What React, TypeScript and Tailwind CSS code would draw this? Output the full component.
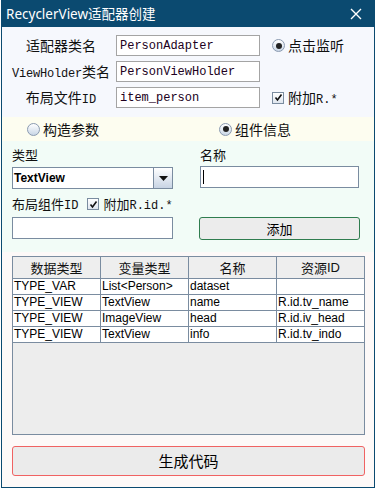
import React from "react";

const CJK = '"Noto Sans CJK SC", "Noto Sans", sans-serif';
const MONO = '"Liberation Mono", "Noto Sans CJK SC", monospace';
const SANS = '"Liberation Sans", Arial, "Noto Sans CJK SC", sans-serif';

function Mono({ children }: { children: React.ReactNode }) {
  return (
    <span style={{ fontFamily: MONO }} className="text-[12px]">
      {children}
    </span>
  );
}

function Radio({ checked }: { checked?: boolean }) {
  return (
    <span className="relative inline-flex h-[13px] w-[13px] items-center justify-center rounded-full border border-[#8a9ab0] bg-gradient-to-b from-[#ffffff] to-[#c9d6e6]">
      {checked && <span className="h-[6px] w-[6px] rounded-full bg-[#222]" />}
    </span>
  );
}

function Check() {
  return (
    <span className="inline-flex h-[12px] w-[12px] items-center justify-center border border-[#7a8ca0] bg-gradient-to-b from-white to-[#dfe6ef]">
      <svg width="9" height="9" viewBox="0 0 9 9">
        <path d="M1.5 4.5 L3.5 7 L7.5 1.5" stroke="#111" strokeWidth="1.6" fill="none" />
      </svg>
    </span>
  );
}

const rows = [
  ["TYPE_VAR", "List<Person>", "dataset", ""],
  ["TYPE_VIEW", "TextView", "name", "R.id.tv_name"],
  ["TYPE_VIEW", "ImageView", "head", "R.id.iv_head"],
  ["TYPE_VIEW", "TextView", "info", "R.id.tv_indo"],
];

export default function App() {
  return (
    <div className="h-[491px] w-[376px] bg-white pl-[1px]" style={{ fontFamily: CJK }}>
      <div className="flex h-[488px] w-[374px] flex-col border border-[#0b4a70]">
        {/* title bar */}
        <div className="flex h-[26px] shrink-0 items-center justify-between bg-[#0b4a70] pl-[4px] pr-[12px] text-white">
          <span className="text-[13.5px]" style={{ fontFamily: '"Noto Sans", "Noto Sans CJK SC", sans-serif' }}>
            RecyclerView适配器创建
          </span>
          <svg width="12" height="12" viewBox="0 0 12 12">
            <path d="M1 1 L11 11 M11 1 L1 11" stroke="white" strokeWidth="1.4" />
          </svg>
        </div>

        {/* top section */}
        <div className="flex h-[90px] shrink-0 flex-col gap-[5px] bg-[#f6f8fd] pt-[8px] text-[14px] text-[#111]">
          <div className="flex h-[21px] items-center">
            <div className="w-[114px] pl-[4px] text-center">适配器类名</div>
            <div className="flex h-[21px] w-[144px] items-center border border-[#a4a4a4] bg-white pl-[3px] text-[#200020]">
              <Mono>PersonAdapter</Mono>
            </div>
            <div className="ml-[12px] flex items-center gap-[3px]">
              <Radio checked />
              <span>点击监听</span>
            </div>
          </div>
          <div className="flex h-[21px] items-center">
            <div className="w-[114px] pl-[4px] text-center">
              <span style={{ fontFamily: MONO }} className="text-[12px] tracking-[-0.2px]">ViewHolder</span>类名
            </div>
            <div className="flex h-[21px] w-[144px] items-center border border-[#a4a4a4] bg-white pl-[3px] text-[#200020]">
              <Mono>PersonViewHolder</Mono>
            </div>
          </div>
          <div className="flex h-[21px] items-center">
            <div className="w-[114px] pl-[4px] text-center">
              布局文件<Mono>ID</Mono>
            </div>
            <div className="flex h-[21px] w-[144px] items-center border border-[#a4a4a4] bg-white pl-[3px] text-[#200020]">
              <Mono>item_person</Mono>
            </div>
            <div className="ml-[12px] flex items-center gap-[4px]">
              <Check />
              <span>
                附加<Mono>R.*</Mono>
              </span>
            </div>
          </div>
        </div>

        {/* radio row */}
        <div className="flex h-[24px] shrink-0 items-center bg-[#fdfdf0] text-[14px] text-[#111]">
          <div className="ml-[25px] flex items-center gap-[3px]">
            <Radio />
            <span>构造参数</span>
          </div>
          <div className="ml-[120px] flex items-center gap-[3px]">
            <Radio checked />
            <span>组件信息</span>
          </div>
        </div>

        {/* component section */}
        <div className="flex h-[111px] shrink-0 bg-[#f2fcf7] pl-[10px] pt-[4px] text-[13px] text-[#111]">
          <div className="flex w-[161px] flex-col">
            <div className="h-[20px] leading-[20px]">类型</div>
            <div className="mt-[2px] flex h-[22px] border border-[#7a8ca0] bg-white">
              <div className="flex flex-1 items-center pl-[1px] text-[12px] font-bold text-black" style={{ fontFamily: SANS }}>
                TextView
              </div>
              <div className="flex w-[19px] items-center justify-center border-l border-[#7a8ca0] bg-gradient-to-b from-white to-[#c8d4e4]">
                <svg width="9" height="5" viewBox="0 0 9 5">
                  <path d="M0 0 L9 0 L4.5 5 Z" fill="#111" />
                </svg>
              </div>
            </div>
            <div className="mt-[7px] flex h-[16px] items-center">
              <span>
                布局组件<Mono>ID</Mono>
              </span>
              <span className="ml-[9px] flex items-center gap-[4px]">
                <Check />
                <span>
                  附加<Mono>R.id.*</Mono>
                </span>
              </span>
            </div>
            <div className="mt-[5px] h-[22px] border border-[#7a8ca0] bg-white" />
          </div>
          <div className="ml-[27px] flex w-[160px] flex-col">
            <div className="h-[20px] leading-[20px]">名称</div>
            <div className="mt-[1px] flex h-[22px] w-[159px] items-center border border-[#7a8ca0] bg-white pl-[2px]">
              <span className="h-[14px] w-[1px] bg-black" />
            </div>
            <div className="ml-[-1px] mt-[29px] flex h-[23px] items-center justify-center rounded-[3px] border border-[#2f7d4f] bg-[#ececec] text-[13px] text-black">
              添加
            </div>
          </div>
        </div>

        {/* table section */}
        <div className="flex flex-1 flex-col bg-[#fdf9f8] pl-[10px] pt-[4px]">
          <div className="flex h-[179px] w-[353px] flex-col border border-[#7a8ca0] bg-[#ededed]">
            <div className="grid h-[22px] grid-cols-[88px_88px_88px_87px] border-b border-[#7a8ca0] bg-[#eeeeee] text-[13px] text-[#111]">
              {["数据类型", "变量类型", "名称"].map((h) => (
                <div key={h} className="flex items-center justify-center border-r border-[#7a8ca0]">
                  {h}
                </div>
              ))}
              <div className="flex items-center justify-center">
                资源<span style={{ fontFamily: SANS }}>ID</span>
              </div>
            </div>
            {rows.map((r, i) => (
              <div
                key={i}
                className="grid h-[16px] grid-cols-[88px_88px_88px_87px] border-b border-[#7a8ca0] bg-white text-[12px] leading-[15px] text-black"
                style={{ fontFamily: SANS }}
              >
                {r.map((c, j) => (
                  <div key={j} className={"pl-[1px] " + (j < 3 ? "border-r border-[#7a8ca0]" : "")}>
                    {c}
                  </div>
                ))}
              </div>
            ))}
          </div>
          <div className="mt-[11px] flex h-[30px] w-[353px] items-center justify-center rounded-[3px] border border-[#f06262] bg-[#ebebeb] text-[15px] text-black">
            生成代码
          </div>
        </div>
      </div>
    </div>
  );
}
